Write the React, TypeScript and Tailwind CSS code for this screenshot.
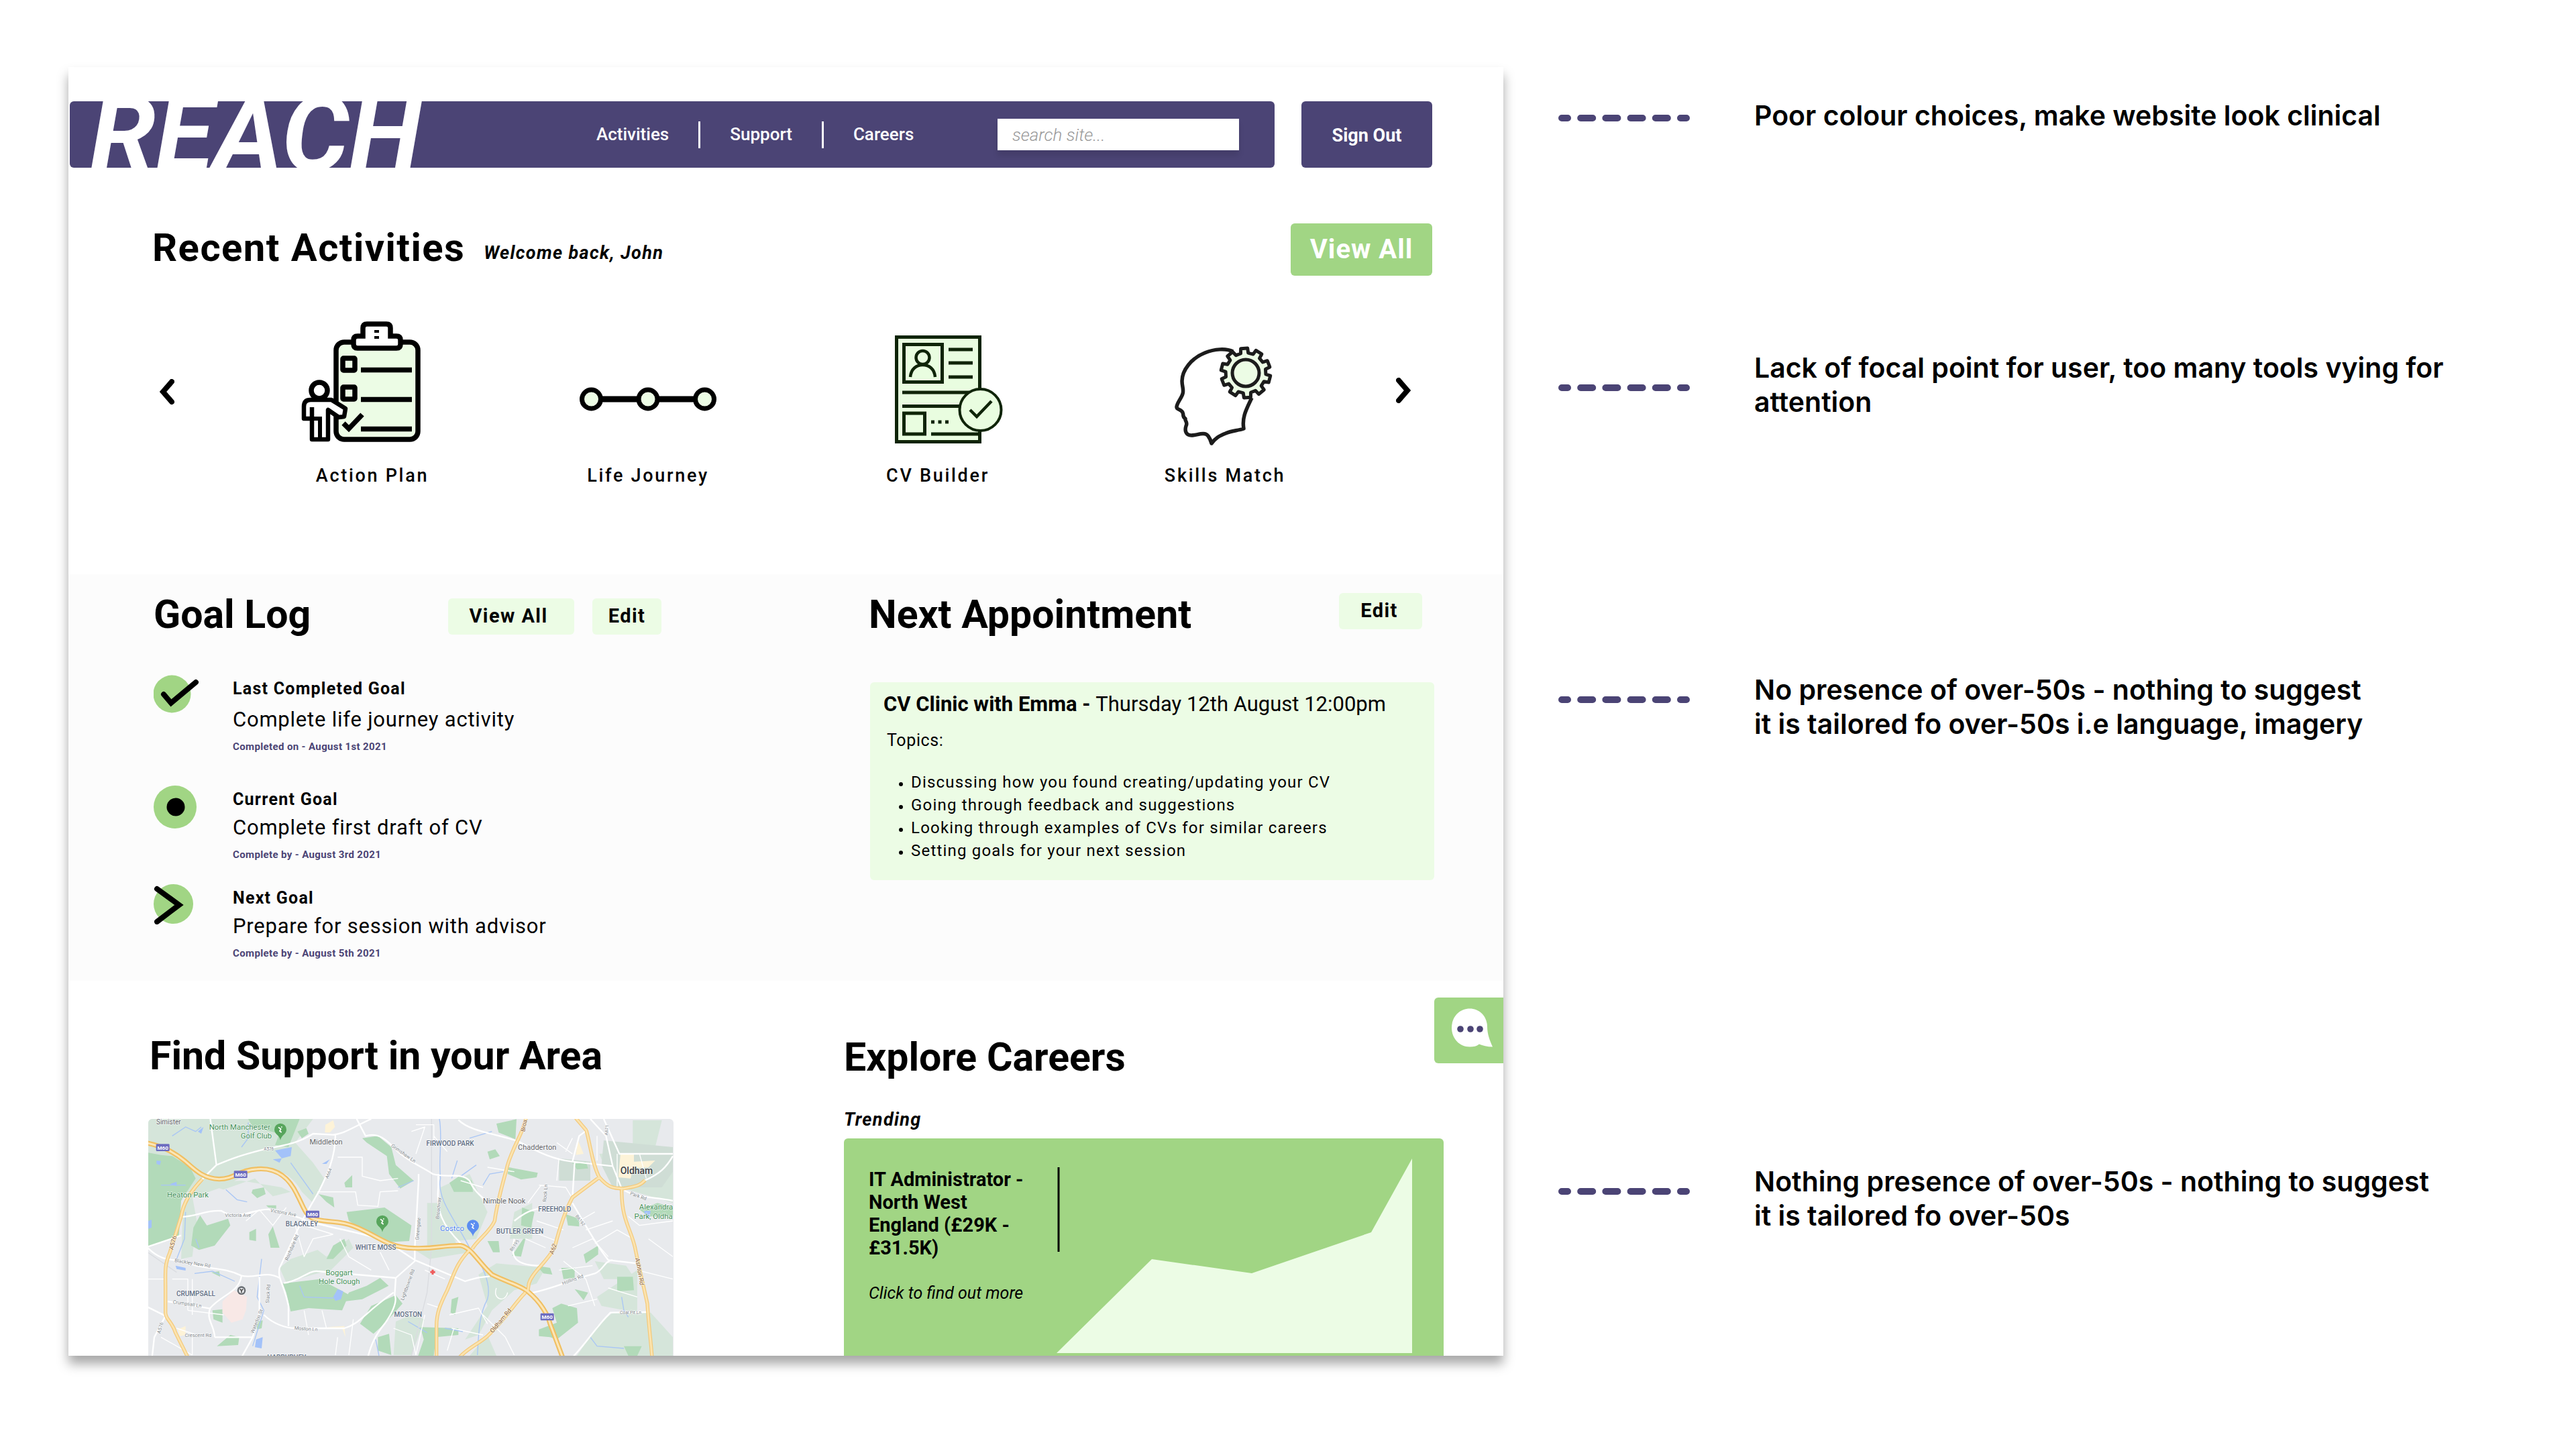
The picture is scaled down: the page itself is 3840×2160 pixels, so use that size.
const activities = [
  { label: "Action Plan", icon: <ActionPlanIcon /> },
  { label: "Life Journey", icon: <LifeJourneyIcon /> },
  { label: "CV Builder", icon: <CvBuilderIcon /> },
  { label: "Skills Match", icon: <SkillsMatchIcon /> },
];

const goals = [
  {
    title: "Last Completed Goal",
    text: "Complete life journey activity",
    date: "Completed on - August 1st 2021",
    icon: <DoneIcon />,
    row: "mb-12",
    body: "mt-3",
  },
  {
    title: "Current Goal",
    text: "Complete first draft of CV",
    date: "Complete by - August 3rd 2021",
    icon: <CurrentIcon />,
    row: "mb-[34px]",
    body: "mt-2",
  },
  {
    title: "Next Goal",
    text: "Prepare for session with advisor",
    date: "Complete by - August 5th 2021",
    icon: <NextIcon />,
    row: "",
    body: "mt-2",
  },
];

const topics = [
  "Discussing how you found creating/updating your CV",
  "Going through feedback and suggestions",
  "Looking through examples of CVs for similar careers",
  "Setting goals for your next session",
];

const notes = [
  { lines: ["Poor colour choices, make website look clinical"], row: "", dash: "mt-6" },
  {
    lines: ["Lack of focal point for user, too many tools vying for", "attention"],
    row: "mt-[325px]",
    dash: "mt-[50px]",
  },
  {
    lines: ["No presence of over-50s - nothing to suggest", "it is tailored fo over-50s i.e language, imagery"],
    row: "mt-[378px]",
    dash: "mt-[35px]",
  },
  {
    lines: ["Nothing presence of over-50s - nothing to suggest", "it is tailored fo over-50s"],
    row: "mt-[631px]",
    dash: "mt-[35px]",
  },
];

function ActionPlanIcon() {
  return (
    <svg viewBox="449 477 212 190" className="h-[190px] w-[212px]" fill="none" stroke="#000" strokeWidth="7.5">
      <rect x="501" y="510" width="122" height="145" rx="12" fill="#ecfce5" />
      <path d="M541 501h-8q-6 0-6 6v6q0 6 6 6h58q6 0 6-6v-6q0-6-6-6h-9v-12q0-6-6-6h-29q-6 0-6 6z" fill="#fff" />
      <path d="M558 494h7M558 503h7" strokeWidth="4" />
      <rect x="511" y="534" width="18" height="18" rx="1" />
      <rect x="511" y="577" width="18" height="18" rx="1" />
      <path d="M538 551.500h76M538 595.500h76M538 639.500h76" />
      <path d="M512 631l8 8 20-21" />
      <path
        d="M465 624h-12v-18q0-10 10-10h31l21 13-2 12-8 1-16-11v44h-24v-48"
        fill="#fff"
        strokeWidth="6.500"
        strokeLinejoin="round"
      />
      <path d="M464 624h13v31" strokeWidth="6" />
      <circle cx="476" cy="582" r="12" fill="#fff" />
    </svg>
  );
}

function LifeJourneyIcon() {
  return (
    <svg viewBox="862 477 212 190" className="h-[190px] w-[212px]" stroke="#000" strokeWidth="7" fill="#ecfce5">
      <path d="M883 595h169" strokeWidth="9" />
      <circle cx="883.500" cy="595" r="14" />
      <circle cx="968" cy="595" r="14" />
      <circle cx="1052.500" cy="595" r="14" />
    </svg>
  );
}

function CvBuilderIcon() {
  return (
    <svg viewBox="1301 477 194 190" className="h-[190px] w-[194px]" stroke="#0f2408" strokeWidth="5" fill="none">
      <rect x="1336.500" y="502.500" width="124" height="156" fill="#e9fde0" />
      <rect x="1347.500" y="513.500" width="57" height="56" />
      <circle cx="1375.500" cy="533" r="10" strokeWidth="4.500" />
      <path d="M1357 562c1-12 9-18 18.500-18s17.500 6 18.500 18" strokeWidth="4.500" />
      <path d="M1414 521h36M1414 541h36M1414 562h36M1345 585h100M1345 605.500h88M1388 647h73" />
      <rect x="1347.500" y="616" width="31" height="31" />
      <path d="M1388 629h5M1398.500 629h5M1409 629h5" />
      <circle cx="1461.500" cy="611" r="31" fill="#e9fde0" strokeWidth="4" />
      <path d="M1446 611l10 10 22-23" strokeWidth="4.500" />
    </svg>
  );
}

// closed outline of a cog with flat teeth
function gearPath(cx: number, cy: number, teeth: number, outer: number, inner: number) {
  const points: string[] = [];
  const step = (Math.PI * 2) / teeth;
  for (let i = 0; i < teeth; i++) {
    const a = i * step + 0.25;
    [
      [inner, -0.3],
      [outer, -0.22],
      [outer, 0.22],
      [inner, 0.3],
    ].forEach(([r, t]) => {
      points.push(`${(cx + r * Math.cos(a + t * step)).toFixed(1)} ${(cy + r * Math.sin(a + t * step)).toFixed(1)}`);
    });
  }
  return `M${points.join("L")}Z`;
}

function SkillsMatchIcon() {
  return (
    <svg
      viewBox="1746 477 160 190"
      className="h-[190px] w-[160px]"
      stroke="#1c1c1c"
      strokeWidth="5.500"
      fill="none"
      strokeLinejoin="round"
    >
      <path d="M1838 524c-10-5-28-4-42 2c-20 8-34 26-34 42c0 8 3 13 1 19c-2 7-9 14-9 20c0 4 7 3 9 8c2 4-1 6 4 9c-1 4 4 5 1 11c-2 6-1 14 8 14c8 0 20-6 25 1c3 4 4 7 5 11c6-8 11-11 21-15c9-4 18-4 27-7c-3-17 4-29 12-46" />
      <path d={gearPath(1857, 556, 10, 37, 30)} fill="#ecfce5" strokeWidth="5" />
      <circle cx="1857" cy="556" r="20" fill="#ecfce5" strokeWidth="5" />
    </svg>
  );
}

function DoneIcon() {
  return (
    <svg viewBox="228 1007 70 58" className="h-[58px] w-[70px]">
      <circle cx="255.500" cy="1035.500" r="28" fill="#a1d584" />
      <path d="M243 1036l11 13 37-31" stroke="#000" strokeWidth="8" fill="none" strokeLinecap="round" />
    </svg>
  );
}

function CurrentIcon() {
  return (
    <svg viewBox="0 0 64 64" className="size-16">
      <circle cx="32" cy="32" r="32" fill="#a1d584" />
      <circle cx="33" cy="32" r="13.500" />
    </svg>
  );
}

function NextIcon() {
  return (
    <svg viewBox="228 1318 60 60" className="size-[60px]">
      <circle cx="257.500" cy="1347.500" r="29.500" fill="#a1d584" />
      <path d="M233 1325l33 24-33 25" stroke="#000" strokeWidth="8" fill="none" strokeLinecap="round" />
    </svg>
  );
}

function Chevron({ flip = false }: { flip?: boolean }) {
  return (
    <svg viewBox="0 0 22 38" className="h-[38px] w-[22px]" fill="none" stroke="#000" strokeWidth="8">
      <path d={flip ? "M4 4l13 15-13 15" : "M18 4L5 19l13 15"} strokeLinecap="round" />
    </svg>
  );
}

function Dashes({ className }: { className: string }) {
  return (
    <svg viewBox="0 0 196 10" className={`h-[10px] w-[196px] shrink-0 ${className}`}>
      <path
        d="M5 5h186"
        stroke="#4b4475"
        strokeWidth="10"
        strokeLinecap="round"
        strokeDasharray="18 19.200"
        strokeDashoffset="9"
      />
    </svg>
  );
}

const motorways = [
  "M-10 130C60 145 110 165 170 215C215 255 250 290 320 293C390 292 410 252 490 248C590 240 640 300 670 365C700 420 705 465 760 475C830 490 870 475 960 520C1040 555 1080 600 1190 602C1290 606 1320 588 1400 590C1450 600 1475 660 1540 720C1610 755 1660 765 1700 795C1760 845 1790 900 1800 940L1856 1090",
];

const aRoads = [
  "M245 293C190 350 160 400 150 460L100 620C75 680 80 700 80 780V890C80 920 110 930 125 980L180 1090",
  "M1692 20C1680 90 1620 170 1605 250C1580 340 1560 420 1552 480C1530 530 1480 560 1452 604",
  "M1440 610C1380 670 1370 720 1340 790C1310 850 1292 890 1292 950V1090",
  "M1915 20L1962 75C1980 140 1990 230 2020 285C2060 330 2080 335 2130 335C2180 325 2200 325 2225 298",
  "M2020 285L1900 375C1870 430 1840 520 1820 600C1780 670 1720 710 1705 760L1700 795",
  "M2120 340C2120 480 2160 510 2180 600C2200 700 2220 780 2235 850C2240 940 2250 1010 2256 1090",
  "M1690 800C1640 850 1600 920 1520 995C1480 1030 1430 1050 1395 1090",
];

const minorRoads = [
  "M280 20L308 230L245 293M308 230C380 200 420 185 520 160C620 140 680 130 740 90L830 95C880 90 920 60 1000 24",
  "M935 24L975 100C1040 80 1080 130 1120 170C1160 210 1230 240 1275 270C1340 290 1400 260 1440 300C1460 350 1500 380 1530 400",
  "M840 95C840 200 800 280 765 350L690 480C650 560 620 630 590 690C580 740 610 760 630 860V950",
  "M150 462C220 460 260 430 330 435C400 480 460 430 540 428C620 450 680 460 710 480C860 520 1000 540 1080 580L1195 655L1420 750C1480 730 1500 730 1530 728",
  "M0 596L150 545M0 600C60 660 100 650 160 660C240 700 330 680 420 725C480 740 530 700 590 735",
  "M420 725C410 800 330 810 280 870C260 920 300 950 300 1000M610 758C680 750 720 700 760 705L1110 735L1195 660L1195 600L1212 300V270",
  "M1110 735L1105 810C1120 840 1090 900 1060 940C1020 990 1000 1030 985 1090M90 840L280 872M0 865L80 905L30 1000L20 1090",
  "M520 900C560 940 620 960 660 960L880 960C950 940 960 900 1100 800M300 1000H470L420 1090M500 890V730M470 1000L500 890",
  "M1390 28C1440 80 1560 90 1660 125C1760 180 1820 205 1900 215L2080 235M1900 215L1930 100L1970 70M2080 235L2050 100L1980 24",
  "M2080 235L2120 335C2180 380 2260 370 2349 390M2225 298C2290 270 2320 240 2349 190",
  "M1300 270V330C1290 440 1320 500 1400 580M1900 375L1910 215M1900 400C1960 500 2000 580 2060 655L2190 670",
  "M1700 805C1800 790 1900 740 2000 715C2040 700 2040 660 2080 655M2235 888L2070 890C2000 960 1960 1030 1900 1090",
  "M1640 480C1700 430 1760 410 1800 440M1640 560C1620 640 1640 680 1760 680M2040 24L2110 180L2349 180",
];

const streets = [
  "M850 195H960V280L1040 300L1120 290M760 350H930L940 410L1030 415L1040 350L1120 345M700 500L830 540M440 480L500 430L560 500L620 420",
  "M200 740V900M110 740H180V880M0 740H80M130 960L250 1000M200 1000V1080M180 880L340 900M60 1000L200 1080",
  "M660 500L700 640L740 560L830 540M860 560L900 640L1000 700M1040 620L1080 700M700 880L720 990M780 880L800 960M850 1000L840 1080M920 920L900 1080",
  "M1180 80L1240 60L1200 180M1280 100L1340 170M1200 50H1280V140M1520 240L1640 260M1500 330L1400 300M1750 320L1870 330L1900 380M1700 400L1760 320",
  "M1690 560L1780 600M1700 520L1830 570M1740 480L1860 520M1900 600L1990 560L2060 640M1930 480L2000 440M1960 520L2080 480M2000 580L2100 520L2170 560M1840 700L1990 680M1860 660L1960 740",
  "M1240 700L1330 740M1250 850L1310 870M1350 900L1480 870L1520 940M1360 960L1500 990M1560 780C1540 830 1600 850 1610 800M1960 740L2000 860M1880 860L2010 830M2060 780L2190 820",
  "M2100 180V340M2200 180L2230 290M2010 100V210M1830 130L1900 180M1840 200L1830 300M1900 110L1870 170M2150 460L2200 500L2349 480M2240 560L2349 640M2190 700L2349 740",
  "M1100 960L1180 990L1200 1080M1240 900L1200 1080M1340 1060L1370 960M1500 900L1600 1000L1640 1080",
];

const meadows = [
  "M3 24H740L660 130L740 220L790 290L740 400L690 350C640 260 560 230 470 260L330 330L190 380L150 280L60 190L3 180Z",
  "M240 310L420 300L600 330L640 350L560 370L480 290L340 340Z",
  "M160 400L200 370L220 480L200 640L150 650Z",
  "M590 690L640 650L760 610L800 640L900 560L920 600L820 700L740 720L620 755Z",
  "M1310 330L1440 270L1520 440L1470 560L1380 570L1310 470Z",
  "M1250 400L1310 400L1380 580L1250 590Z",
  "M1195 610L1400 600L1440 620L1260 650Z",
  "M1480 720L1560 670L1780 690L1740 760L1640 790L1540 880L1480 990L1420 1010L1520 860Z",
  "M1920 1083L2010 950L2080 890L2250 890L2349 1000V1083Z",
  "M1440 1083L1520 990L1560 1083ZM2170 30H2300L2270 150L2170 140Z",
  "M1640 440L1720 400L1720 560L1620 560ZM2010 820L2190 700L2190 890L2030 860Z",
  "M2000 660L2140 680L2180 740L2040 740ZM2020 180L2349 160V400L2080 320Z",
  "M1110 930L1180 900L1240 920L1180 1080L1100 1080Z",
];

const parks = [
  "M3 175L60 185L110 190L190 240L215 290L150 390L140 550L3 595Z",
  "M450 24H680L630 150L570 140L590 90L470 60Z",
  "M205 510L235 455L265 500L360 470L370 500L300 590L230 610L195 590Z",
  "M470 340L520 330L528 360L490 378L465 355Z",
  "M960 110L1030 100L1090 150L1110 230L1190 300L1130 335L1080 270L1070 190L980 130Z",
  "M890 440L1060 420L1180 500L1170 570L1070 575L960 520L900 480Z",
  "M765 360L830 375L835 420L800 395Z",
  "M605 760L770 740L900 810L870 880L720 870L640 885L620 800Z",
  "M900 800L980 770L1040 735L1078 770L960 830L880 840Z",
  "M950 940L1000 860L1110 812L1140 850L1060 940L1010 985Z",
  "M1030 1000L1080 985L1090 1080L1030 1060ZM310 1040L370 990L410 1000L405 1035Z",
  "M290 880L335 875V935L295 920ZM455 530L485 515V570L455 565ZM540 540L560 505L590 600L550 600Z",
  "M800 650L830 590L880 560L890 590L830 650ZM880 310L915 275V330L885 330Z",
  "M1350 310L1400 275L1450 300L1455 350L1370 350ZM1560 45L1650 25L1645 115L1570 85Z",
  "M1520 170L1555 160L1575 190L1530 205ZM1615 240L1745 265L1740 285L1670 295L1610 270Z",
  "M1675 420L1730 440L1715 510L1670 500ZM1870 450L1930 470V505L1880 500Z",
  "M1680 560H1690L1670 640L1630 635ZM1950 630L2015 590V630L1960 670ZM1850 690L1910 690V735L1860 740Z",
  "M2100 730L2170 730L2175 790L2100 795ZM1810 870L1850 850L1920 870L1925 935L1830 1010L1800 1000L1750 995V965L1830 935Z",
  "M1220 955L1390 960V990L1290 1000L1280 1083H1210L1235 1010ZM1360 830L1390 820L1375 900L1355 890Z",
  "M2130 1040L2210 1040L2190 1083H2150ZM1900 220L1960 215L1970 245L1920 250ZM2200 430L2280 400L2349 420V460H2240Z",
  "M670 80L710 65L720 90L690 110ZM530 410H575V425L540 420ZM485 930L515 925L510 960L490 965ZM285 710L320 705L325 730Z",
  "M1740 680L1800 690L1810 720L1770 715ZM1910 785L1970 800L1950 835ZM1520 570L1570 570L1575 620L1545 620Z",
];

const water = [
  "M570 165L645 150L640 190L600 200ZM560 205L600 200L590 220ZM225 80L250 60L240 90Z",
  "M40 210L60 212L55 230L40 225ZM100 315L130 305L130 325ZM3 480L18 475V510L3 515ZM780 225L815 205L800 225Z",
  "M830 820L850 785L875 795L865 830L840 838ZM485 1010L515 1000L510 1050L480 1045ZM125 680L170 690L170 702L130 695Z",
  "M2220 435L2250 435L2245 465L2230 470Z",
];

const streams = [
  "M110 100L170 60L215 80L240 60M450 40V110L420 150M60 320L170 320M350 340L400 385L445 395M170 440L165 560L130 650",
  "M1305 24C1320 100 1300 200 1310 290C1290 380 1380 480 1440 600C1490 660 1540 760 1520 830C1480 900 1480 1000 1475 1080",
  "M1385 210L1360 290M1470 230L1400 280M1590 260L1530 270L1500 320M1440 110L1540 80M1120 330L1190 300M640 220L740 360",
  "M510 650L490 820L520 880L470 1040M680 770L700 820L830 825M2120 820L2130 880L2150 910M1980 1000L2010 1040L2130 1050",
  "M210 715L290 705L390 750M215 560L230 600M1165 930L1250 980M1330 960L1410 975M1020 1010L1035 1083",
];

type Label = [string, number, number, number, string, number?];

const mapLabels: Label[] = [
  ["Simister", 94, 48, 30, "#5f6368"],
  ["North Manchester", 412, 73, 34, "#3f8f56"],
  ["Golf Club", 486, 112, 34, "#3f8f56"],
  ["Middleton", 798, 138, 33, "#5f6368"],
  ["Heaton Park", 180, 376, 34, "#3f8f56"],
  ["Boggart", 857, 722, 34, "#3f8f56"],
  ["Hole Clough", 857, 762, 34, "#3f8f56"],
  ["Chadderton", 1742, 163, 33, "#5f6368"],
  ["Nimble Nook", 1595, 402, 33, "#5f6368"],
  ["Costco", 1362, 524, 34, "#4a80ee"],
  ["Alexandra", 2274, 430, 34, "#3f8f56"],
  ["Park, Oldha", 2262, 472, 34, "#3f8f56"],
  ["A576", 542, 166, 19, "#80868b"],
  ["A664", 816, 270, 20, "#80868b", -68],
  ["Victoria Ave", 404, 462, 22, "#80868b"],
  ["Victoria Ave", 606, 450, 22, "#80868b", 10],
  ["Rochdale Rd", 652, 602, 22, "#80868b", -67],
  ["Blackley New Rd", 200, 676, 22, "#80868b", 9],
  ["Crumpsall Ln", 176, 858, 22, "#80868b", 8],
  ["Crescent Rd", 226, 998, 22, "#80868b"],
  ["Moston Ln", 708, 970, 22, "#80868b", 4],
  ["Slack Rd", 546, 806, 22, "#80868b", -86],
  ["Waterloo St", 495, 932, 22, "#80868b", -68],
  ["A576", 64, 960, 22, "#80868b", -75],
  ["Lightbowne Rd", 1170, 768, 22, "#80868b", -70],
  ["Grimshaw Ln", 1140, 184, 22, "#80868b", 35],
  ["Greengate", 1217, 516, 22, "#80868b", -85],
  ["Broadway", 1308, 424, 22, "#80868b", -85],
  ["Rock Ln", 1786, 356, 22, "#80868b", -85],
  ["B6195", 1646, 594, 20, "#80868b", -55],
  ["Hollins Rd", 1904, 750, 22, "#80868b", -20],
  ["Park Rd", 2192, 376, 22, "#80868b", 20],
  ["Coal Pit Ln", 2160, 896, 20, "#80868b"],
  ["A671", 2060, 74, 20, "#80868b", -85],
  ["B6192", 1930, 482, 20, "#80868b", 52],
  ["A576", 122, 580, 27, "#8a5a2b", -75],
  ["A62", 1822, 608, 27, "#8a5a2b", -72],
  ["Broa", 1692, 56, 26, "#8a5a2b", -78],
  ["Oldham Rd", 1586, 932, 27, "#8a5a2b", -50],
  ["Ashton Rd", 2192, 708, 27, "#8a5a2b", 80],
];

const districts: Label[] = [
  ["BLACKLEY", 690, 505, 30, "#5b6b82"],
  ["WHITE MOSS", 1020, 609, 30, "#5b6b82"],
  ["CRUMPSALL", 216, 815, 30, "#5b6b82"],
  ["MOSTON", 1165, 908, 30, "#5b6b82"],
  ["FIRWOOD PARK", 1353, 144, 30, "#5b6b82"],
  ["BUTLER GREEN", 1665, 537, 30, "#5b6b82"],
  ["FREEHOLD", 1820, 438, 30, "#5b6b82"],
  ["HARPURHEY", 622, 1100, 30, "#5b6b82"],
  ["Oldham", 2187, 270, 42, "#3c4043"],
];

const shields = [
  [68, 152],
  [416, 272],
  [738, 450],
  [1787, 909],
];

function Pin({ x, y, color }: { x: number; y: number; color: string }) {
  return (
    <g transform={`translate(${x} ${y})`}>
      <path d="M0 48C-4 24-27 22-27 0a27 27 0 0 1 54 0C27 22 4 24 0 48Z" fill={color} />
      <path d="M-9-10L2-2l-5 9 8 6M3-11h5" stroke="#fff" strokeWidth="5" fill="none" />
    </g>
  );
}

function SupportMap() {
  return (
    <svg
      viewBox="3 24 2349 1059"
      preserveAspectRatio="xMidYMin slice"
      className="block h-[353px] w-[783px] rounded-t-md bg-[#e8eaed]"
      role="img"
      aria-label="Map of support in North Manchester and Oldham"
    >
      <path d={meadows.join("")} fill="#d5e5da" />
      <path d="M2040 120L2349 150V260L2300 330L2080 330L2030 230ZM1840 200L1980 215L1980 300L1840 300Z" fill="#cfddd5" />
      <path d={parks.join("")} fill="#b2dab9" />
      <path d="M385 790L445 820L440 880L425 920L375 935L335 890V840Z" fill="#f8e8e6" />
      <path
        d="M795 50L830 30L838 60L815 85H793ZM135 965L170 950V990L145 995ZM2115 180H2175V215L2270 210L2240 240L2170 245L2160 290L2105 285ZM1925 120L1950 180L1915 185ZM800 955L880 950L885 1000L870 960Z"
        fill="#fdf3d8"
      />
      <path d={water.join("")} fill="#a3c2f9" />
      <path d={streams.join("")} fill="none" stroke="#a9c6f5" strokeWidth="4" />
      <path d="M1270 24V600L1250 800L1180 1083M0 620L130 710" fill="none" stroke="#dadce0" strokeWidth="4" />
      <g fill="none" stroke="#fff" strokeLinejoin="round">
        <path d={streets.join("")} strokeWidth="4" />
        <path d={minorRoads.join("")} strokeWidth="7" />
      </g>
      <g fill="none" strokeLinejoin="round">
        <path d={aRoads.join("")} stroke="#f3c878" strokeWidth="16" />
        <path d={motorways.join("")} stroke="#f0bf62" strokeWidth="22" />
        <path d={aRoads.join("")} stroke="#fbe3ae" strokeWidth="9" />
        <path d={motorways.join("")} stroke="#fbe6b8" strokeWidth="9" />
      </g>
      <Pin x={594} y={71} color="#57a55c" />
      <Pin x={1050} y={482} color="#57a55c" />
      <Pin x={1455} y={502} color="#5c8df0" />
      <circle cx="420" cy="791" r="19" fill="#666b70" />
      <circle cx="420" cy="791" r="12" fill="#e8eaed" />
      <path d="M413 784l7 8 7-8M420 790v11" stroke="#555" strokeWidth="5" fill="none" />
      <path d="M1275 698v22M1264 709h22" stroke="#ee5a5a" strokeWidth="9" />
      <g textAnchor="middle" stroke="#fff" strokeWidth="3" paintOrder="stroke" fontFamily="Roboto, sans-serif">
        {mapLabels.map(([text, x, y, size, color, angle = 0], i) => (
          <text key={i} x={x} y={y} fontSize={size} fill={color} transform={`rotate(${angle} ${x} ${y})`}>
            {text}
          </text>
        ))}
        {districts.map(([text, x, y, size, color]) => (
          <text key={text} x={x} y={y} fontSize={size} fill={color} fontWeight="500">
            {text}
          </text>
        ))}
      </g>
      {shields.map(([x, y]) => (
        <g key={x}>
          <rect x={x - 30} y={y - 16} width="60" height="32" rx="4" fill="#6c6cc0" />
          <text
            x={x}
            y={y + 9}
            fontSize="24"
            fontWeight="700"
            fill="#fff"
            textAnchor="middle"
            fontFamily="Roboto, sans-serif"
          >
            M60
          </text>
        </g>
      ))}
    </svg>
  );
}

function Header() {
  return (
    <header className="flex gap-10 pt-[51px] pr-[106px] pl-0.5 text-[26px] font-medium text-white">
      <div className="flex h-[99px] flex-1 items-center rounded-md bg-[#4b4475]">
        <a href="#" className="w-[785px] pl-[30px] text-[158px] leading-[99px] font-bold italic">
          REACH
        </a>
        <nav className="flex flex-1 items-center gap-11">
          <a href="#">Activities</a>
          <span className="h-10 w-[3px] bg-white" />
          <a href="#">Support</a>
          <span className="h-10 w-[3px] bg-white" />
          <a href="#">Careers</a>
        </nav>
        <input
          type="search"
          aria-label="Search site"
          placeholder="search site..."
          className="mr-[53px] h-[47px] w-[360px] bg-white px-[22px] font-light text-black italic shadow-[0_8px_8px_rgba(0,0,0,0.1)] placeholder:text-[#999]"
        />
      </div>
      <button className="h-[99px] w-[195px] rounded-md bg-[#4b4475] pt-1 text-[27px] font-bold">Sign Out</button>
    </header>
  );
}

function RecentActivities() {
  return (
    <section className="pt-[83px] pr-[106px] pb-[129px] pl-[125px]">
      <div className="flex items-start">
        <h1 className="text-[58px] leading-[72px] font-bold tracking-wide">Recent Activities</h1>
        <p className="mt-6 ml-7 text-[27px] leading-10 font-bold tracking-wider italic">Welcome back, John</p>
        <button className="ml-auto h-[78px] w-[211px] rounded-md bg-[#a1d584] text-[40px] font-bold tracking-wide text-white">
          View All
        </button>
      </div>
      <div className="mt-[66px] flex items-start">
        <button aria-label="Previous" className="h-[214px] w-[116px] pl-[11px]">
          <Chevron />
        </button>
        <ul className="grid flex-1 grid-cols-[424fr_398fr_466fr_390fr]">
          {activities.map((item) => (
            <li key={item.label}>
              <a href="#" className="flex flex-col items-center">
                {item.icon}
                <span className="mt-6 text-[27px] leading-9 font-medium tracking-widest">{item.label}</span>
              </a>
            </li>
          ))}
        </ul>
        <button aria-label="Next" className="h-[210px] w-[114px] pl-[60px]">
          <Chevron flip />
        </button>
      </div>
    </section>
  );
}

function GoalLog() {
  return (
    <section>
      <div className="flex w-[757px] items-start gap-[27px]">
        <h2 className="mr-auto text-[59px] leading-[72px] font-bold">Goal Log</h2>
        <button className="mt-3 h-[54px] w-[188px] rounded-md bg-[#ecfce5] pr-2 text-[29px] font-bold tracking-wider">
          View All
        </button>
        <button className="mt-3 h-[54px] w-[103px] rounded-md bg-[#ecfce5] text-[29px] font-bold tracking-wider">
          Edit
        </button>
      </div>
      <ul className="mt-[54px]">
        {goals.map((goal) => (
          <li key={goal.title} className={`flex ${goal.row}`}>
            <div className="w-[118px]">{goal.icon}</div>
            <div className="pt-[7px]">
              <h3 className="text-[25px] leading-7 font-bold tracking-wider">{goal.title}</h3>
              <p className={`text-[31px] leading-10 tracking-wide ${goal.body}`}>{goal.text}</p>
              <p className="mt-2.5 text-[15px] leading-5 font-bold tracking-wide text-[#4b4475]">{goal.date}</p>
            </div>
          </li>
        ))}
      </ul>
    </section>
  );
}

function NextAppointment() {
  return (
    <section className="pr-[103px]">
      <div className="flex items-start justify-between pr-[18px]">
        <h2 className="text-[59px] leading-[72px] font-bold">Next Appointment</h2>
        <button className="mt-1 h-[54px] w-[124px] rounded-md bg-[#ecfce5] pr-1 text-[29px] font-bold tracking-wider">
          Edit
        </button>
      </div>
      <div className="mt-[65px] ml-0.5 rounded-md bg-[#ecfce5] pt-[13px] pb-[27px] pl-5">
        <p className="text-[31px] leading-10">
          <strong>CV Clinic with Emma - </strong>
          Thursday 12th August 12:00pm
        </p>
        <p className="mt-[18px] pl-[5px] text-[25px] leading-8 tracking-wide">Topics:</p>
        <ul className="mt-[29px] list-disc pl-[41px] text-[24px] leading-[34px] tracking-wider marker:text-[18px]">
          {topics.map((topic) => (
            <li key={topic}>{topic}</li>
          ))}
        </ul>
      </div>
    </section>
  );
}

function FindSupport() {
  return (
    <section>
      <h2 className="pl-0.5 text-[59px] leading-[72px] font-bold">Find Support in your Area</h2>
      <div className="mt-[58px]">
        <SupportMap />
      </div>
    </section>
  );
}

function ExploreCareers() {
  return (
    <section className="pt-0.5 pr-[89px]">
      <h2 className="text-[59px] leading-[72px] font-bold">Explore Careers</h2>
      <p className="mt-[39px] text-[27px] leading-9 font-bold tracking-wider italic">Trending</p>
      <a href="#" className="mt-2.5 flex rounded-t-md bg-[#a1d584] pl-[37px]">
        <div className="w-[280px] pt-11">
          <h3 className="text-[29px] leading-[34px] font-bold">
            IT Administrator -<br />
            North West
            <br />
            England (£29K -<br />
            £31.5K)
          </h3>
          <p className="mt-[34px] text-[25px] leading-[34px] italic">Click to find out more</p>
        </div>
        <svg viewBox="1575 1697 577 324" className="h-[324px] flex-1" preserveAspectRatio="xMinYMin meet">
          <path d="M1575 2017L1717 1877L1866 1898L2044 1837L2105 1727V2017Z" fill="#ecfce5" />
          <path d="M1578 1740V1866" stroke="#000" strokeWidth="3" />
        </svg>
      </a>
    </section>
  );
}

function ChatButton() {
  return (
    <button aria-label="Open chat" className="absolute top-[25px] right-0 h-[98px] w-[103px] rounded-l-md bg-[#a1d584]">
      <svg viewBox="2138 1487 103 98" className="h-[98px] w-[103px]">
        <path
          d="M2191 1503.500c15 0 26 12 26 27c0 11 4 21 8 30c-8 0-15-2-20-4c-4 3-8 4-14 4c-16 0-27-13-27-28.500s11-28.500 27-28.500z"
          fill="#fff"
        />
        <g fill="#4b4475">
          <circle cx="2177" cy="1534" r="4.800" />
          <circle cx="2192" cy="1534" r="4.800" />
          <circle cx="2206" cy="1534" r="4.800" />
        </g>
      </svg>
    </button>
  );
}

export default function App() {
  return (
    <main className="grid grid-cols-[2139fr_1599fr] bg-white pt-[100px] pb-[139px] pl-[102px] font-['Roboto',sans-serif] text-black">
      <div className="bg-white shadow-[0_12px_16px_rgba(0,0,0,0.35)]">
        <Header />
        <RecentActivities />
        <div className="grid grid-cols-[1066fr_946fr] bg-[#fcfcfc] pt-6 pb-[31px] pl-[127px]">
          <GoalLog />
          <NextAppointment />
        </div>
        <div className="relative grid grid-cols-[1037fr_983fr] pt-[76px] pl-[119px]">
          <FindSupport />
          <ExploreCareers />
          <ChatButton />
        </div>
      </div>
      <aside className="pt-[47px] pl-[82px] font-['Inter',sans-serif]">
        {notes.map((note) => (
          <div key={note.lines[0]} className={`flex gap-24 ${note.row}`}>
            <Dashes className={note.dash} />
            <p className="text-[41px] leading-[51px] font-semibold whitespace-nowrap">
              {note.lines[0]}
              {note.lines[1] && <br />}
              {note.lines[1]}
            </p>
          </div>
        ))}
      </aside>
    </main>
  );
}
